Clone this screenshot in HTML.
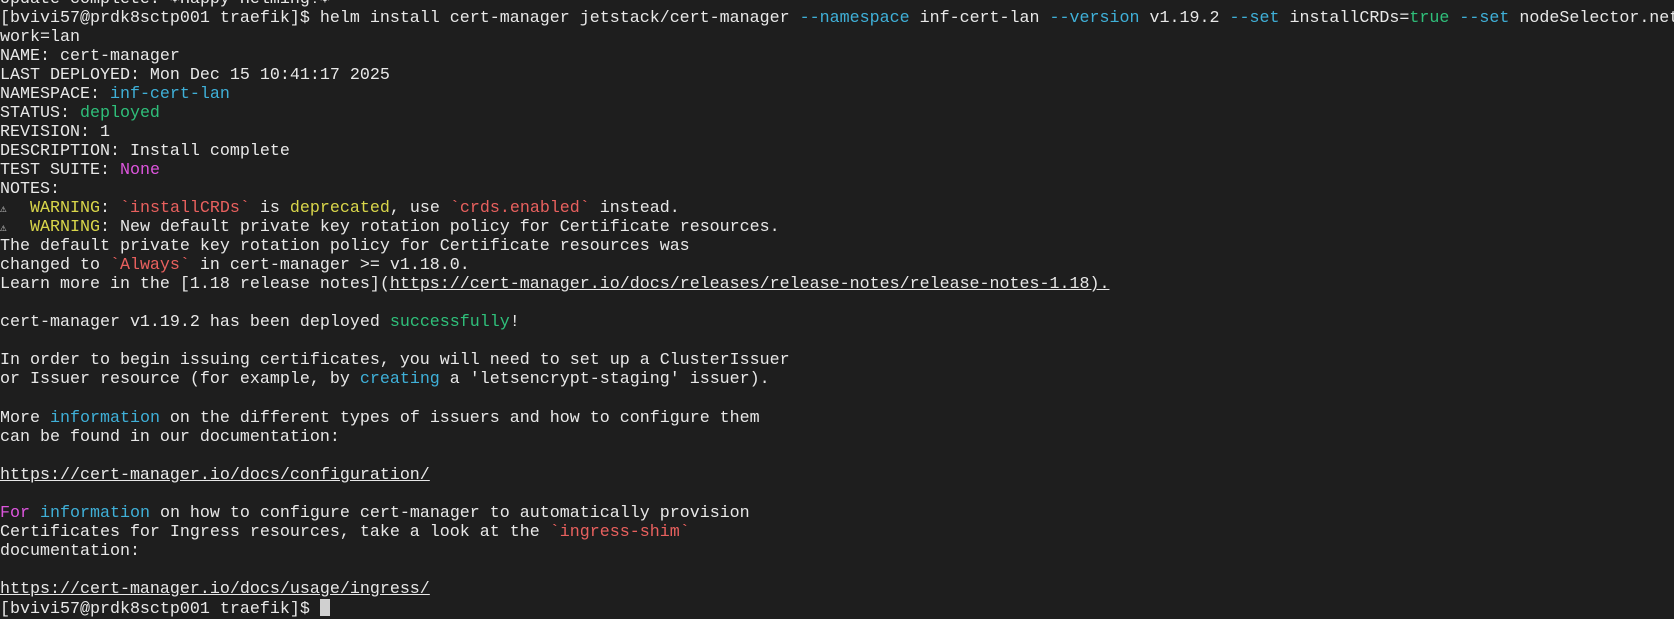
<!DOCTYPE html>
<html><head><meta charset="utf-8"><style>
html,body{margin:0;padding:0;background:#1e1e1e;width:1674px;height:619px;overflow:hidden}
pre{position:absolute;left:0;top:-10.5px;margin:0;font-family:"Liberation Mono","DejaVu Sans Mono",monospace;font-size:16.67px;line-height:19.05px;color:#e8e8e8;white-space:pre}
.c{color:#3fb0d8}.g{color:#2fbf7a}.y{color:#d9d64a}.r{color:#e8605e}.m{color:#dd55dd}
.u{text-decoration:underline}
.w{display:inline-block;width:10px;height:10px;line-height:10px;font-size:11px;color:#cfcfcf;vertical-align:0}
.cur{display:inline-block;width:10px;height:17px;line-height:0;background:#d0d0d0;vertical-align:-3px}
</style></head><body><pre>Update complete. ⎈Happy Helming!⎈
[bvivi57@prdk8sctp001 traefik]$ helm install cert-manager jetstack/cert-manager <span class="c">--namespace</span> inf-cert-lan <span class="c">--version</span> v1.19.2 <span class="c">--set</span> installCRDs=<span class="g">true</span> <span class="c">--set</span> nodeSelector.net
work=lan
NAME: cert-manager
LAST DEPLOYED: Mon Dec 15 10:41:17 2025
NAMESPACE: <span class="c">inf-cert-lan</span>
STATUS: <span class="g">deployed</span>
REVISION: 1
DESCRIPTION: Install complete
TEST SUITE: <span class="m">None</span>
NOTES:
<span class="w">⚠</span>  <span class="y">WARNING</span>: <span class="r">`installCRDs`</span> is <span class="y">deprecated</span>, use <span class="r">`crds.enabled`</span> instead.
<span class="w">⚠</span>  <span class="y">WARNING</span>: New default private key rotation policy for Certificate resources.
The default private key rotation policy for Certificate resources was
changed to <span class="r">`Always`</span> in cert-manager &gt;= v1.18.0.
Learn more in the [1.18 release notes](<span class="u">https://cert-manager.io/docs/releases/release-notes/release-notes-1.18).</span>

cert-manager v1.19.2 has been deployed <span class="g">successfully</span>!

In order to begin issuing certificates, you will need to set up a ClusterIssuer
or Issuer resource (for example, by <span class="c">creating</span> a 'letsencrypt-staging' issuer).

More <span class="c">information</span> on the different types of issuers and how to configure them
can be found in our documentation:

<span class="u">https://cert-manager.io/docs/configuration/</span>

<span class="m">For</span> <span class="c">information</span> on how to configure cert-manager to automatically provision
Certificates for Ingress resources, take a look at the <span class="r">`ingress-shim`</span>
documentation:

<span class="u">https://cert-manager.io/docs/usage/ingress/</span>
[bvivi57@prdk8sctp001 traefik]$ <span class="cur"></span></pre></body></html>
